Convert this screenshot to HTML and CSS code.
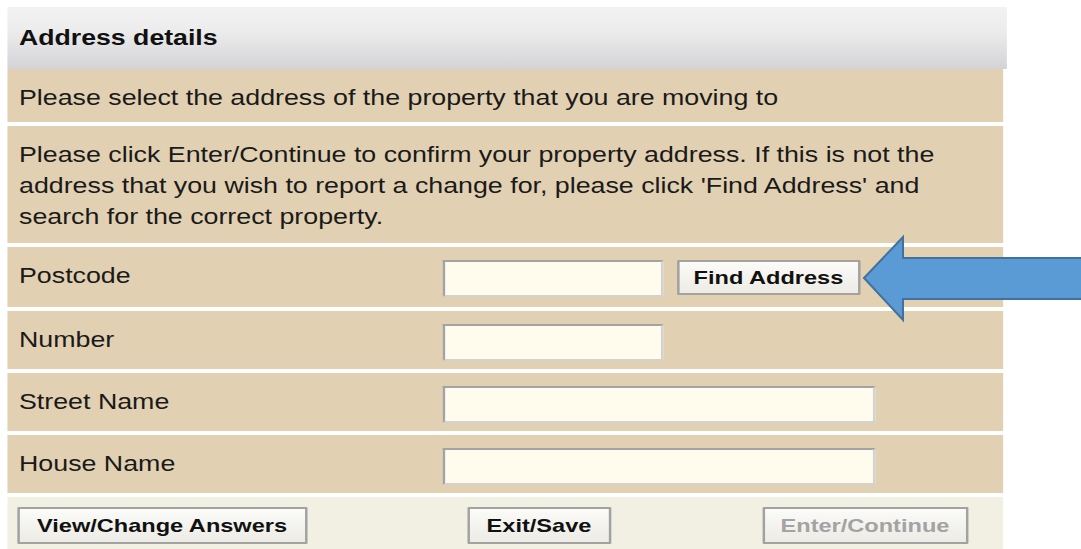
FILE: index.html
```html
<!DOCTYPE html>
<html lang="en">
<head>
<meta charset="utf-8">
<title>Address details</title>
<link rel="stylesheet" href="styles.css">
</head>
<body>
<div class="page">
  <form class="panel">
    <div class="panel-head">Address details</div>
    <div class="row row-text">Please select the address of the property that you are moving to</div>
    <div class="row row-text row-para">Please click Enter/Continue to confirm your property address. If this is not the address that you wish to report a change for, please click 'Find Address' and search for the correct property.</div>
    <div class="row row-field row-postcode">
      <label class="label" for="postcode">Postcode</label>
      <div class="fields">
        <input class="input input-short" id="postcode" type="text">
        <button class="btn btn-find" type="button">Find Address</button>
      </div>
    </div>
    <div class="row row-field">
      <label class="label" for="number">Number</label>
      <div class="fields"><input class="input input-short" id="number" type="text"></div>
    </div>
    <div class="row row-field">
      <label class="label" for="street">Street Name</label>
      <div class="fields"><input class="input input-long" id="street" type="text"></div>
    </div>
    <div class="row row-field">
      <label class="label" for="house">House Name</label>
      <div class="fields"><input class="input input-long" id="house" type="text"></div>
    </div>
    <div class="actions">
      <button class="btn btn-view" type="button">View/Change Answers</button>
      <button class="btn btn-exit" type="button">Exit/Save</button>
      <button class="btn btn-enter" type="button" disabled>Enter/Continue</button>
    </div>
  </form>
</div>
<svg class="pointer" width="226" height="100" viewBox="0 0 226 100" aria-hidden="true">
  <path d="M9 48 L48 7 L48 28 L240 28 L240 69 L48 69 L48 90 Z" fill="#5b9bd5" stroke="#41719c" stroke-width="2" stroke-linejoin="miter"/>
</svg>
</body>
</html>
```

FILE: styles.css
```css
html {
  overflow: hidden;
}

body {
  margin: 0;
  background: #ffffff;
  font-family: "Liberation Sans", Arial, sans-serif;
  color: #1a1a1a;
}

/* the form is laid out narrow and stretched sideways */
.page {
  width: 872px;
  padding: 7px 0 0 5.65px;
  box-sizing: border-box;
  transform: scaleX(1.24);
  transform-origin: 0 0;
}

.panel {
  width: 806.5px;
  margin: 0;
}

.panel-head {
  height: 62px;
  box-sizing: border-box;
  padding: 16px 9.7px 0;
  font-size: 21.5px;
  font-weight: bold;
  line-height: 31px;
  color: #111;
  background: linear-gradient(#f2f2f2 0%, #ececec 40%, #d3d3d7 100%);
}

.row {
  width: 803.2px;
  box-sizing: border-box;
  background: #e2d0b2;
  font-size: 21.6px;
  line-height: 31px;
  margin-bottom: 4px;
}

.row-text {
  height: 53px;
  padding: 13px 9.7px 0;
}

.row-para {
  height: 117px;
}

.row-field {
  display: flex;
  height: 58px;
  padding-top: 13px;
}

.row-postcode {
  height: 60px;
}

.label {
  width: 351.6px;
  flex: none;
  box-sizing: border-box;
  padding-left: 9.7px;
}

.fields {
  display: flex;
  align-items: flex-start;
  gap: 10.5px;
}

.input {
  height: 37px;
  box-sizing: border-box;
  margin: 0;
  padding: 0 4px;
  background: #fffcee;
  border: 2px solid;
  border-color: #a3a3a3 #d2d2d0 #d2d2d0 #a3a3a3;
  font: inherit;
}

.input-short {
  width: 178.2px;
}

.input-long {
  width: 349.2px;
}

.btn {
  height: 37px;
  box-sizing: border-box;
  margin: 0;
  padding: 0;
  font-family: "Liberation Sans", Arial, sans-serif;
  font-size: 19px;
  font-weight: bold;
  color: #111;
  background: linear-gradient(#fbfbf8, #ecebe5);
  border: 2px solid #a2a2a0;
  border-radius: 1px;
}

.btn-find {
  width: 147.6px;
  height: 35px;
}

.actions {
  display: flex;
  align-items: flex-start;
  width: 803.2px;
  height: 52px;
  box-sizing: border-box;
  padding: 10px 0 0 8.1px;
  background: #f2efe3;
}

.btn-view {
  width: 233.9px;
}

.btn-exit {
  width: 116.1px;
  margin-left: 129px;
}

.btn-enter {
  width: 166.1px;
  margin-left: 121.8px;
}

.btn-enter:disabled {
  color: #a3a3a3;
}

/* callout arrow pointing at the Find Address button */
.pointer {
  position: absolute;
  left: 855px;
  top: 230px;
  overflow: visible;
}
```
